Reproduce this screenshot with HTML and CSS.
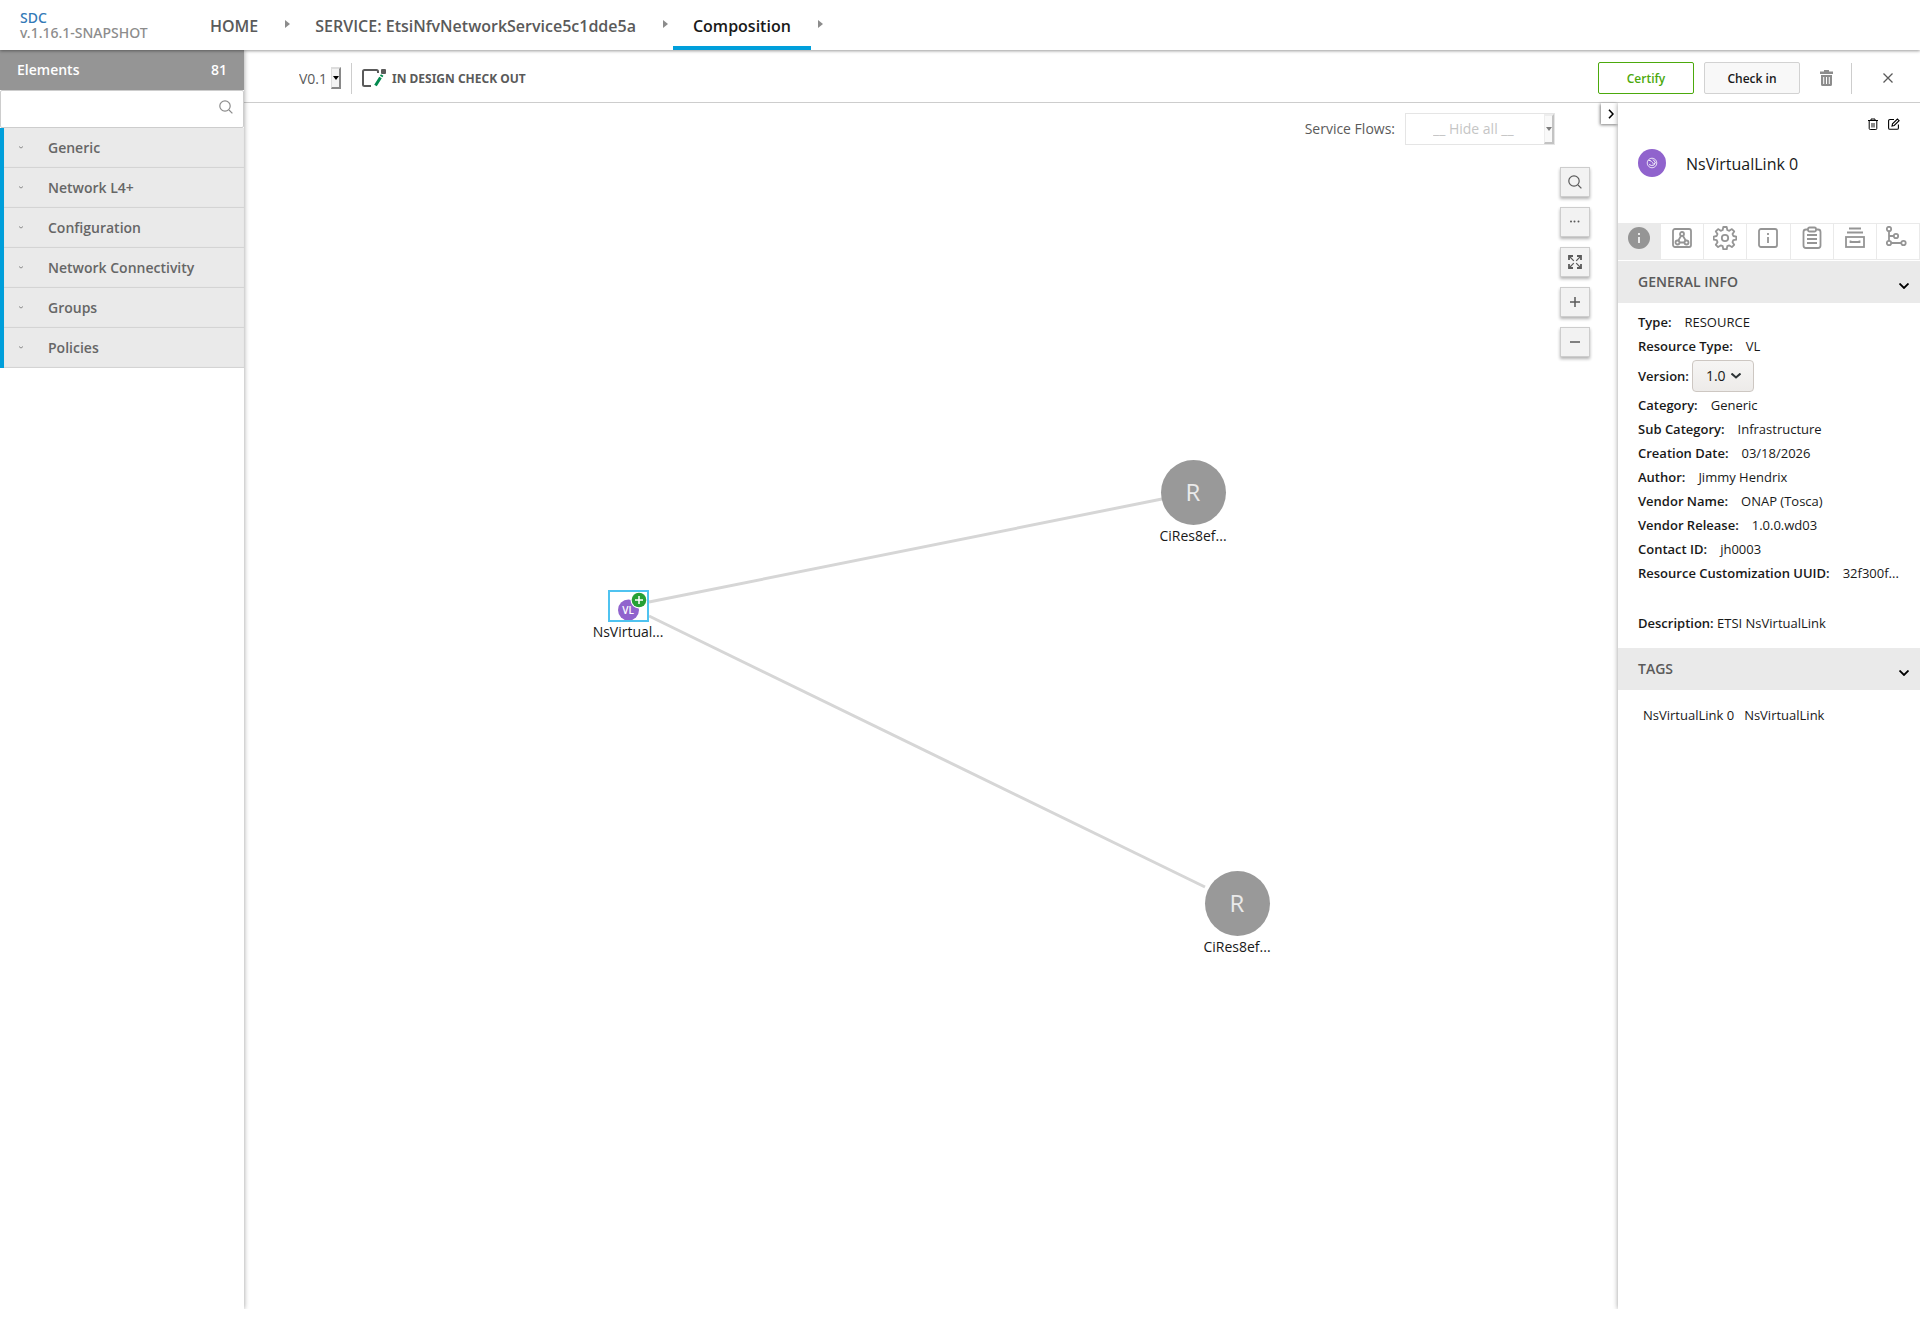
FILE: index.html
```html
<!DOCTYPE html>
<html lang="en">
<head>
    <meta charset="UTF-8">
    <meta name="viewport" content="width=device-width, initial-scale=1.0">
    <title>SDC - Composition</title>
    <link rel="stylesheet" href="styles.css">
</head>
<body>

    <header class="top-nav">
        <div class="logo">
            <a href="#">SDC</a>
            <span class="version">v.1.16.1-SNAPSHOT</span>
        </div>
        <nav class="breadcrumbs">
            <a href="#" class="crumb">HOME</a>
            <span class="arrow"></span>
            <a href="#" class="crumb">SERVICE: EtsiNfvNetworkService5c1dde5a</a>
            <span class="arrow"></span>
            <a href="#" class="crumb selected">Composition</a>
            <span class="arrow"></span>
        </nav>
    </header>

    <div class="workspace">
        <aside class="palette">
            <div class="palette-title"><span>Elements</span><span>81</span></div>
            <div class="palette-search">
                <input type="text" aria-label="Search elements">
                <svg width="14" height="14" viewBox="0 0 14 14" fill="none" stroke="#8c8c8c" stroke-width="1.2"><circle cx="6" cy="6" r="5.2"/><path d="M10 10l3.4 3.4"/></svg>
            </div>
            <div class="categories">
                <button type="button" class="category"><svg width="4" height="3" viewBox="0 0 4 3" fill="none" stroke="#8c8c8c"><path d="M0 .5l2 1.6L4 .5"/></svg>Generic</button>
                <button type="button" class="category"><svg width="4" height="3" viewBox="0 0 4 3" fill="none" stroke="#8c8c8c"><path d="M0 .5l2 1.6L4 .5"/></svg>Network L4+</button>
                <button type="button" class="category"><svg width="4" height="3" viewBox="0 0 4 3" fill="none" stroke="#8c8c8c"><path d="M0 .5l2 1.6L4 .5"/></svg>Configuration</button>
                <button type="button" class="category"><svg width="4" height="3" viewBox="0 0 4 3" fill="none" stroke="#8c8c8c"><path d="M0 .5l2 1.6L4 .5"/></svg>Network Connectivity</button>
                <button type="button" class="category"><svg width="4" height="3" viewBox="0 0 4 3" fill="none" stroke="#8c8c8c"><path d="M0 .5l2 1.6L4 .5"/></svg>Groups</button>
                <button type="button" class="category"><svg width="4" height="3" viewBox="0 0 4 3" fill="none" stroke="#8c8c8c"><path d="M0 .5l2 1.6L4 .5"/></svg>Policies</button>
            </div>
        </aside>

        <main class="main">
            <div class="toolbar">
                <div class="select-box version-box">
                    <select aria-label="Service version"><option>V0.1</option></select>
                    <span class="drop"></span>
                </div>
                <span class="divider"></span>
                <div class="status">
                    <svg width="25" height="18" viewBox="0 0 25 18" fill="none">
                        <path d="M16 4V2.500Q16 1 14.500 1H2.500Q1 1 1 2.500v13Q1 17 2.500 17H9" stroke="#5a5a5a" stroke-width="2"/>
                        <rect x="19" width="5" height="5" rx="1" fill="#5a5a5a"/>
                        <path d="M13.500 16.500l5-8M19.200 7.500l1-1.500" stroke="#038a4f" stroke-width="3"/>
                    </svg>
                    <span>IN DESIGN CHECK OUT</span>
                </div>
                <div class="actions">
                    <button type="button" class="btn certify">Certify</button>
                    <button type="button" class="btn">Check in</button>
                    <button type="button" class="icon-btn" aria-label="Delete">
                        <svg width="13" height="16" viewBox="0 0 13 16" fill="#8c8c8c"><path d="M4 0h5v1.500h4V4H0V1.500h4z"/><path fill-rule="evenodd" d="M1 5h11v9.500Q12 16 10.500 16h-8Q1 16 1 14.500zM3.200 7v7h1V7zM6 7v7h1V7zM8.800 7v7h1V7z"/></svg>
                    </button>
                    <span class="divider"></span>
                    <button type="button" class="icon-btn close" aria-label="Close">
                        <svg width="10" height="10" viewBox="0 0 10 10" stroke="#5a5a5a" stroke-width="1.300"><path d="M.5.5l9 9M9.500.5l-9 9"/></svg>
                    </button>
                </div>
            </div>

            <div class="content">
                <div class="canvas">
                    <svg class="edges" stroke="#d6d6d6" stroke-width="3">
                        <line x1="405" y1="499" x2="918" y2="396"/>
                        <line x1="405" y1="513" x2="961" y2="784"/>
                    </svg>

                    <div class="node vl">
                        <div class="frame">
                            <svg width="41" height="32" viewBox="0 0 41 32">
                                <circle cx="20.500" cy="20" r="10.500" fill="#9063cd"/>
                                <text x="20" y="24" class="vl-text">VL</text>
                                <circle cx="31" cy="10" r="8.500" fill="#fff"/>
                                <circle cx="31" cy="10" r="7.300" fill="#26a035"/>
                                <path d="M31 6v8M27 10h8" stroke="#fff" stroke-width="1.500"/>
                            </svg>
                        </div>
                        <span>NsVirtual...</span>
                    </div>
                    <div class="node r1"><div class="disc">R</div><span>CiRes8ef...</span></div>
                    <div class="node r2"><div class="disc">R</div><span>CiRes8ef...</span></div>

                    <div class="canvas-tools">
                        <div class="flows">
                            <label for="flows">Service Flows:</label>
                            <div class="select-box flows-box">
                                <select id="flows" disabled><option>__ Hide all __</option></select>
                                <span class="drop"></span>
                            </div>
                        </div>
                        <div class="tools">
                            <button type="button" aria-label="Search"><svg width="14" height="14" viewBox="0 0 14 14" fill="none" stroke="#5a5a5a" stroke-width="1.200"><circle cx="6" cy="6" r="5.200"/><path d="M10 10l3.400 3.400"/></svg></button>
                            <button type="button" aria-label="More"><svg width="14" height="14" viewBox="0 0 14 14" fill="#5a5a5a"><circle cx="3" cy="6.500" r="1"/><circle cx="6.500" cy="6.500" r="1"/><circle cx="10.500" cy="6.500" r="1"/></svg></button>
                            <button type="button" aria-label="Fit to screen"><svg width="14" height="14" viewBox="0 0 14 14" fill="none" stroke="#5a5a5a" stroke-width="1.800"><path d="M1 5V1h4M9 1h4v4M13 9v4H9M5 13H1V9"/><path stroke-width="1.200" d="M1 1l4.800 4.800M13 1L8.200 5.800M13 13L8.200 8.200M1 13l4.800-4.800"/></svg></button>
                            <button type="button" aria-label="Zoom in"><svg width="14" height="14" viewBox="0 0 14 14" stroke="#5a5a5a" stroke-width="1.500"><path d="M7 2v10M2 7h10"/></svg></button>
                            <button type="button" aria-label="Zoom out"><svg width="14" height="14" viewBox="0 0 14 14" stroke="#5a5a5a" stroke-width="1.500"><path d="M2 7h10"/></svg></button>
                        </div>
                    </div>
                    <button type="button" class="panel-toggle" aria-label="Hide panel"><svg width="6" height="10" viewBox="0 0 6 10" fill="none" stroke="#000" stroke-width="1.600"><path d="M1 .7L5 5 1 9.300"/></svg></button>
                </div>

                <aside class="details">
                    <div class="details-actions">
                        <button type="button" class="icon-btn" aria-label="Delete component"><svg width="10" height="12" viewBox="0 0 10 12" fill="none" stroke="#000"><path d="M0 2.500h10M3 2.500V1h4v1.500M1.200 3v7.500q0 1 1 1h5.600q1 0 1-1V3"/><path fill="#888" stroke="none" d="M3 5h4v4.500H3z"/></svg></button>
                        <button type="button" class="icon-btn" aria-label="Edit component"><svg width="12" height="12" viewBox="0 0 12 12" fill="none" stroke="#000" stroke-width="1.100"><path d="M6 1.500H2q-1.400 0-1.400 1.400v7Q.6 11.300 2 11.300h7q1.400 0 1.400-1.400V6.500"/><path d="M4 8l.5-2.200L9.400 1l1.700 1.700L6.200 7.500z"/></svg></button>
                    </div>
                    <div class="details-title">
                        <svg width="28" height="28" viewBox="0 0 28 28" fill="none" stroke="#fff"><circle cx="14" cy="14" r="14" fill="#9063cd" stroke="none"/><circle cx="14" cy="14" r="4.800" stroke-width=".8"/><path stroke-width=".9" d="M10.500 11.500h2l1 1.500M15 10.500l2.500 3-1.500 1M11 15.500l2.500 1 2.500-.5 1-2M14 13.500l1.500 1"/></svg>
                        <span>NsVirtualLink 0</span>
                    </div>
                    <div class="tabs">
                        <button type="button" class="active" aria-label="Information"><svg width="24" height="24" viewBox="0 0 24 24"><circle cx="12" cy="12" r="11" fill="#959595"/><path d="M11 7h2v2h-2zM11 11h2v6h-2z" fill="#eaeaea"/></svg></button>
                        <button type="button" aria-label="Structure"><svg width="24" height="24" viewBox="0 0 24 24" fill="none" stroke="#959595" stroke-width="1.800"><rect x="3" y="3" width="18" height="18" rx="2"/><circle cx="12" cy="8" r="2"/><circle cx="7.500" cy="16.500" r="2"/><circle cx="16.500" cy="16.500" r="2"/><path d="M11 10l-3 5M13 10l3 5M10 16.500h4"/></svg></button>
                        <button type="button" aria-label="Settings"><svg width="24" height="24" viewBox="0 0 24 24" fill="none" stroke="#959595" stroke-width="1.800"><circle cx="12" cy="12" r="3.200"/><path stroke-linejoin="round" d="M10.300 1h3.400l.6 3 2 .8 2.600-1.700 2.300 2.300-1.700 2.600.8 2 3 .6v3l-3 .6-.8 2 1.700 2.600-2.300 2.300-2.600-1.700-2 .8-.6 3h-3.400l-.6-3-2-.8-2.600 1.700-2.300-2.300 1.700-2.600-.8-2-3-.6v-3l3-.6.8-2-1.700-2.600 2.300-2.300 2.600 1.700 2-.8z"/></svg></button>
                        <button type="button" aria-label="Properties"><svg width="24" height="24" viewBox="0 0 24 24" fill="none" stroke="#959595" stroke-width="1.800"><rect x="3" y="3" width="18" height="18" rx="2"/><path d="M12 7v2M12 11v6"/></svg></button>
                        <button type="button" aria-label="Deployment artifacts"><svg width="24" height="24" viewBox="0 0 24 24" fill="none" stroke="#959595" stroke-width="1.800"><path d="M8 3.500H6Q3.500 3.500 3.500 6v13.500Q3.500 22 6 22h12q2.500 0 2.500-2.500V6q0-2.500-2.500-2.500h-2"/><rect x="8" y="1.500" width="8" height="4" rx="1.500"/><path d="M7 9h10M7 13h10M7 17h10"/></svg></button>
                        <button type="button" aria-label="Inputs"><svg width="24" height="24" viewBox="0 0 24 24" fill="none" stroke="#959595" stroke-width="1.800"><path d="M6 2.500h12M4 6.500h16"/><rect x="3" y="11" width="18" height="10"/><path d="M7.500 14.500v1.500h9v-1.500"/></svg></button>
                        <button type="button" aria-label="Relations"><svg width="24" height="24" viewBox="0 0 24 24" fill="none" stroke="#959595" stroke-width="1.800"><circle cx="3" cy="3" r="2.200"/><circle cx="10" cy="10" r="2.200"/><circle cx="3" cy="17" r="2.200"/><circle cx="17.500" cy="17" r="2.200"/><path d="M3 5v10M5 17h10.500M3 10h5"/></svg></button>
                    </div>

                    <button type="button" class="section-title">GENERAL INFO<svg width="10" height="6" viewBox="0 0 10 6" fill="none" stroke="#000" stroke-width="1.800"><path d="M.5.5L5 5 9.500.5"/></svg></button>
                    <div class="info">
                        <div class="row"><b>Type:</b><span>RESOURCE</span></div>
                        <div class="row"><b>Resource Type:</b><span>VL</span></div>
                        <div class="version-row">
                            <label for="version">Version:</label>
                            <div class="select-box item-version">
                                <select id="version"><option>1.0</option></select>
                                <svg width="10" height="6" viewBox="0 0 10 6" fill="none" stroke="#2e3436" stroke-width="2"><path d="M.5.5L5 4.500 9.500.5"/></svg>
                            </div>
                        </div>
                        <div class="row"><b>Category:</b><span>Generic</span></div>
                        <div class="row"><b>Sub Category:</b><span>Infrastructure</span></div>
                        <div class="row"><b>Creation Date:</b><span>03/18/2026</span></div>
                        <div class="row"><b>Author:</b><span>Jimmy Hendrix</span></div>
                        <div class="row"><b>Vendor Name:</b><span>ONAP (Tosca)</span></div>
                        <div class="row"><b>Vendor Release:</b><span>1.0.0.wd03</span></div>
                        <div class="row"><b>Contact ID:</b><span>jh0003</span></div>
                        <div class="row"><b>Resource Customization UUID:</b><span>32f300f...</span></div>
                        <div class="description"><b>Description:</b> ETSI NsVirtualLink</div>
                    </div>

                    <button type="button" class="section-title">TAGS<svg width="10" height="6" viewBox="0 0 10 6" fill="none" stroke="#000" stroke-width="1.800"><path d="M.5.5L5 5 9.500.5"/></svg></button>
                    <div class="tags"><span>NsVirtualLink 0</span><span>NsVirtualLink</span></div>
                </aside>
            </div>
        </main>
    </div>

</body>
</html>
```
FILE: styles.css
```css
* {
    box-sizing: border-box;
}
body {
    margin: 0;
    font-family: "Open Sans", "Noto Sans", sans-serif;
    font-size: 13px;
    color: #191919;
    background-color: #fff;
}
a {
    text-decoration: none;
    color: inherit;
}
button, input, select {
    font: inherit;
    color: inherit;
    margin: 0;
}
button {
    cursor: pointer;
    padding: 0;
}
svg {
    display: block;
    flex: none;
}
b {
    font-weight: 600;
}

/* top navigation */
.top-nav {
    position: relative;
    z-index: 2;
    display: flex;
    height: 50px;
    background: #fff;
    box-shadow: 0 1px 3px rgba(0, 0, 0, 0.4);
}
.logo {
    display: flex;
    flex-direction: column;
    width: 190px;
    padding: 10px 0 0 20px;
    font-family: "Noto Sans", sans-serif;
    font-size: 14px;
    font-weight: 500;
    line-height: 15px;
}
.logo a {
    color: #337ab7;
}
.logo .version {
    color: #8c8c8c;
}
.breadcrumbs {
    display: flex;
    font-size: 16px;
    font-weight: 600;
}
.crumb {
    padding: 0 20px;
    line-height: 52px;
    height: 50px;
    color: #5a5a5a;
}
.crumb.selected {
    color: #191919;
    border-bottom: 4px solid #009fdb;
}
.arrow {
    width: 17px;
    padding: 20px 0 0 7px;
}
.arrow::before {
    content: "";
    display: block;
    width: 0;
    border: 4px solid transparent;
    border-left: 5px solid #8c8c8c;
    border-right: 0;
}

.workspace {
    display: flex;
    min-height: calc(100vh - 60px);
}

/* left palette */
.palette {
    position: relative;
    z-index: 1;
    width: 244px;
    flex: none;
    background: #fff;
    box-shadow: 0 0 5px rgba(0, 0, 0, 0.4);
    font-size: 14px;
    font-weight: 600;
}
.palette-title {
    display: flex;
    justify-content: space-between;
    padding: 0 17px;
    line-height: 40px;
    color: #fff;
    background: #959595;
}
.palette-search {
    display: flex;
    align-items: center;
    height: 38px;
    padding: 0 10px 4px 0;
    border: 1px solid #cdcdcd;
    border-radius: 2px;
}
.palette-search input {
    flex: 1;
    min-width: 0;
    height: 30px;
    border: 0;
    outline: 0;
    background: none;
}
.category {
    display: flex;
    align-items: center;
    gap: 25px;
    width: 100%;
    height: 40px;
    padding: 0 0 2px 15px;
    border: 0;
    border-left: 4px solid #009fdb;
    box-shadow: inset 0 -1px 1px #d2d2d2;
    background: #eaeaea;
    color: #666;
}

/* toolbar */
.main {
    flex: 1;
    min-width: 0;
    display: flex;
    flex-direction: column;
}
.toolbar {
    display: flex;
    align-items: center;
    height: 53px;
    padding: 4px 27px 0 55px;
    border-bottom: 1px solid #cdcdcd;
}
.divider {
    width: 1px;
    height: 31px;
    background: #cdcdcd;
}
.select-box {
    position: relative;
}
.select-box select {
    appearance: none;
    border: 0;
    background: none;
    padding: 0;
    width: 100%;
    height: 100%;
}
.drop {
    position: absolute;
    top: 0;
    right: 0;
    bottom: 0;
    width: 10px;
    display: flex;
    align-items: center;
    justify-content: center;
    border: 2px outset #ddd;
    border-left-width: 1px;
    background: #f4f4f4;
    pointer-events: none;
}
.drop::before {
    content: "";
    border: 3px solid transparent;
    border-top: 4px solid #000;
    border-bottom: 0;
}
.version-box {
    width: 42px;
    height: 22px;
    margin-right: 10px;
    font-size: 14px;
    color: #5a5a5a;
}
.status {
    display: flex;
    align-items: center;
    gap: 5px;
    margin-left: 10px;
    font-family: "Noto Sans", sans-serif;
    font-size: 12px;
    font-weight: 700;
    color: #5a5a5a;
}
.actions {
    display: flex;
    align-items: center;
    margin-left: auto;
}
.btn {
    width: 96px;
    height: 32px;
    margin-right: 10px;
    border: 1px solid #d2d2d2;
    border-radius: 2px;
    background: #f8f8f8;
    font-size: 12px;
    font-weight: 600;
    color: #191919;
}
.btn.certify {
    border-color: #4ca90c;
    background: #fff;
    color: #4ca90c;
}
.icon-btn {
    border: 0;
    background: none;
}
.actions .icon-btn {
    margin: 0 18px 0 10px;
}
.actions .close {
    margin: 0 0 0 31px;
}

/* canvas */
.content {
    flex: 1;
    display: flex;
}
.canvas {
    position: relative;
    flex: 1;
    min-width: 0;
}
.edges {
    position: absolute;
    width: 100%;
    height: 100%;
}
.node {
    position: absolute;
    width: 80px;
    display: flex;
    flex-direction: column;
    align-items: center;
    font-size: 14px;
    line-height: 20px;
}
.vl {
    left: 344px;
    top: 487px;
}
.r1 {
    left: 909px;
    top: 357px;
}
.r2 {
    left: 953px;
    top: 768px;
}
.frame {
    outline: 2px solid #4fc3f0;
    outline-offset: -2px;
    background: #fff;
}
.vl-text {
    fill: #fff;
    font-size: 10px;
    font-weight: 600;
    text-anchor: middle;
}
.disc {
    width: 65px;
    height: 65px;
    margin-bottom: 1px;
    border-radius: 50%;
    background: #999;
    color: #eaeaea;
    font-size: 24px;
    line-height: 64px;
    text-align: center;
}
.canvas-tools {
    position: relative;
    display: flex;
    flex-direction: column;
    align-items: flex-end;
    gap: 22px;
    padding: 10px 28px 0 0;
}
.flows {
    display: flex;
    align-items: center;
    gap: 10px;
    margin-right: 35px;
    font-size: 14px;
    color: #5a5a5a;
}
.flows label {
    padding-bottom: 2px;
}
.flows-box {
    width: 150px;
    height: 32px;
    border: 1px solid #cdcdcd;
    opacity: 0.5;
}
.flows-box select {
    padding: 0 0 2px 27px;
    color: #8c8c8c;
    opacity: 1;
}
.tools {
    display: flex;
    flex-direction: column;
    gap: 10px;
}
.tools button {
    display: grid;
    place-items: center;
    width: 30px;
    height: 30px;
    border: 1px solid #cdcdcd;
    background: #f2f2f2;
    box-shadow: 0 2px 3px rgba(0, 0, 0, 0.3);
}
.panel-toggle {
    position: absolute;
    top: 0;
    right: 0;
    display: grid;
    place-items: center;
    width: 17px;
    height: 21px;
    padding-left: 2px;
    border: 0;
    background: #fff;
    box-shadow: -1px 1px 3px rgba(0, 0, 0, 0.5);
}

/* details panel */
.details {
    position: relative;
    width: 302px;
    flex: none;
    background: #fff;
    box-shadow: 0 0 5px rgba(0, 0, 0, 0.4);
    clip-path: inset(0 0 0 -8px);
}
.details-actions {
    display: flex;
    justify-content: flex-end;
    gap: 10px;
    padding: 15px 20px 0 0;
}
.details-title {
    display: flex;
    align-items: center;
    gap: 20px;
    height: 66px;
    padding-left: 20px;
    font-size: 16px;
}
.details-title span {
    padding-top: 2px;
}
.tabs {
    display: flex;
    margin-top: 27px;
    border-top: 1px solid #eaeaea;
}
.tabs button {
    flex: 1;
    display: flex;
    justify-content: center;
    height: 36px;
    padding-top: 2px;
    border: 0;
    border-right: 1px solid #eaeaea;
    border-bottom: 1px solid #eaeaea;
    background: #fff;
}
.tabs .active {
    background: #eaeaea;
}
.section-title {
    display: flex;
    justify-content: space-between;
    align-items: center;
    width: 100%;
    height: 42px;
    padding: 0 11px 2px 20px;
    border: 0;
    background: #eaeaea;
    font-size: 14px;
    font-weight: 600;
    color: #5a5a5a;
}
.section-title svg {
    margin-top: 10px;
}
.tabs + .section-title {
    margin-top: 1px;
}
.info {
    padding: 7px 20px 13px;
}
.row {
    display: flex;
    gap: 13px;
    line-height: 24px;
}
.version-row {
    display: flex;
    align-items: center;
    gap: 3px;
    height: 35px;
}
.version-row label {
    font-weight: 600;
}
.item-version {
    width: 62px;
    height: 32px;
    border: 1px solid #cdc7c2;
    border-radius: 4px;
    background: linear-gradient(#f6f5f4, #edebe9);
    font-size: 14px;
}
.item-version select {
    padding-left: 13px;
}
.item-version svg {
    position: absolute;
    top: 12px;
    right: 12px;
    pointer-events: none;
}
.description {
    margin-top: 26px;
    line-height: 24px;
}
.tags {
    display: flex;
    gap: 10px;
    padding: 16px 25px;
    line-height: 18px;
}
```
